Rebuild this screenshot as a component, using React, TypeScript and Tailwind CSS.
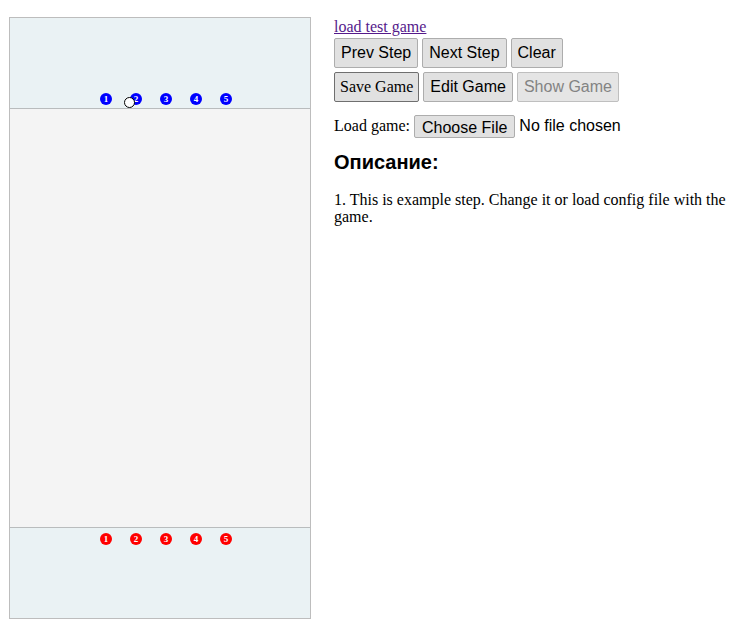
const serif = "font-['Liberation_Serif',serif]";
const sans = "font-['Liberation_Sans',Arial,sans-serif]";

function Piece({ n, color }: { n: number; color: string }) {
  return (
    <div
      className={`w-[12px] h-[12px] rounded-full ${color} text-white text-[9px] font-bold leading-[12px] text-center ${serif}`}
    >
      {n}
    </div>
  );
}

function Btn({ children, className = "" }: { children: React.ReactNode; className?: string }) {
  return (
    <button className={`h-[30px] rounded-[2px] text-[16px] ${className}`}>
      {children}
    </button>
  );
}

export default function App() {
  return (
    <div className="flex items-start bg-white min-h-[634px]">
      {/* board */}
      <div className="ml-[9px] mt-[17px] w-[302px] border border-[#bdbdbd] relative">
        <div className="h-[91px] bg-[#eaf2f4] border-b border-[#b9bcbd] flex items-end pl-[90px] pb-[3px] gap-[18px]">
          {[1, 2, 3, 4, 5].map((n) => (
            <Piece key={n} n={n} color="bg-[#0000ff]" />
          ))}
        </div>
        <div className="h-[418px] bg-[#f4f4f4]" />
        <div className="h-[91px] bg-[#eaf2f4] border-t border-[#b9bcbd] flex items-start pl-[90px] pt-[5px] gap-[18px]">
          {[1, 2, 3, 4, 5].map((n) => (
            <Piece key={n} n={n} color="bg-[#ff0000]" />
          ))}
        </div>
        {/* ball */}
        <div className="absolute left-[114px] top-[79px] w-[11px] h-[11px] rounded-full bg-white border border-black" />
      </div>

      {/* controls */}
      <div className="ml-[23px] pt-[18px] w-[401px] flex flex-col">
        <a href="#" className={`${serif} text-[16px] leading-[18px] text-[#551a8b] underline self-start`}>
          load test game
        </a>
        <div className={`flex gap-[4px] mt-[2px] ${sans}`}>
          <Btn className="px-[6px] bg-[#e1e1e1] border border-[#adadad] text-black">Prev Step</Btn>
          <Btn className="px-[6px] bg-[#e1e1e1] border border-[#adadad] text-black">Next Step</Btn>
          <Btn className="px-[6px] bg-[#e1e1e1] border border-[#adadad] text-black">Clear</Btn>
        </div>
        <div className={`flex gap-[4px] mt-[4px] ${sans}`}>
          <Btn className={`${serif} text-[15px] px-[5px] bg-[#e1e1e1] border border-[#6f6f6f] text-black`}>
            Save Game
          </Btn>
          <Btn className="px-[6px] bg-[#e1e1e1] border border-[#adadad] text-black">Edit Game</Btn>
          <Btn className="px-[6px] bg-[#e5e5e5] border border-[#bfbfbf] text-[#838383]">Show Game</Btn>
        </div>
        <div className={`flex items-center mt-[12px] ${serif} text-[16px]`}>
          <span>Load game:</span>
          <button className={`ml-[4px] h-[23px] px-[7px] bg-[#e1e1e1] border border-[#adadad] rounded-[2px] text-[16px] ${sans}`}>
            Choose File
          </button>
          <span className={`ml-[4px] ${sans}`}>No file chosen</span>
        </div>
        <h3 className={`${sans} font-bold text-[20px] mt-[13px] leading-[23px]`}>Описание:</h3>
        <p className={`${serif} text-[16px] leading-[17px] mt-[17px] text-black`}>
          1. This is example step. Change it or load config file with the game.
        </p>
      </div>
    </div>
  );
}
